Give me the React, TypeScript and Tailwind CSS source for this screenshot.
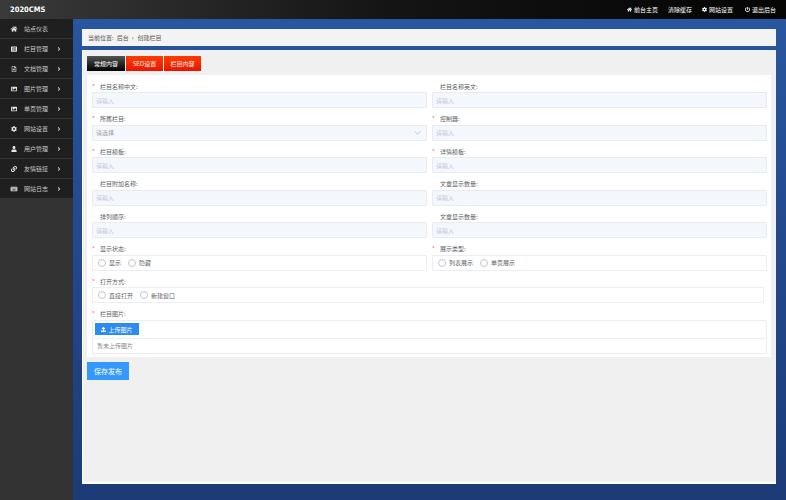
import React from 'react';
import { FaHome, FaListAlt, FaRegFileAlt, FaImage, FaCog, FaUser, FaLink, FaKeyboard, FaAngleRight, FaUpload, FaPowerOff } from 'react-icons/fa';

const font = { fontFamily: '"Noto Sans CJK SC", "Liberation Sans", sans-serif' };

const menu = [
  { label: '站点仪表', icon: FaHome, arrow: false },
  { label: '栏目管理', icon: FaListAlt, arrow: true },
  { label: '文档管理', icon: FaRegFileAlt, arrow: true },
  { label: '图片管理', icon: FaImage, arrow: true },
  { label: '单页管理', icon: FaImage, arrow: true },
  { label: '网站设置', icon: FaCog, arrow: true },
  { label: '用户管理', icon: FaUser, arrow: true },
  { label: '友情链接', icon: FaLink, arrow: true },
  { label: '网站日志', icon: FaKeyboard, arrow: true },
];

const Label = ({ text, required }: { text: string; required?: boolean }) => (
  <div className="flex h-[11px] items-center text-[6px] leading-none text-[#606266]">
    <span className="w-[8px] text-[#f56c6c]">{required ? '*' : ''}</span>
    <span>{text}:</span>
  </div>
);

const Input = ({ label, required, placeholder = '请输入' }: { label: string; required?: boolean; placeholder?: string }) => (
  <div className="h-[32.5px]">
    <Label text={label} required={required} />
    <div className="flex h-[16px] items-center rounded-[1px] border border-[#e8ebf0] bg-[#f4f7fc] px-[3px] text-[6px] text-[#c0c8d4]">
      {placeholder}
    </div>
  </div>
);

const Radio = ({ text }: { text: string }) => (
  <span className="flex items-center text-[6px] text-[#606266]">
    <span className="mr-[3px] h-[8px] w-[8px] rounded-full border border-[#c4c8d0] bg-white" />
    {text}
  </span>
);

const RadioGroup = ({ label, options }: { label: string; options: string[] }) => (
  <div className="h-[32.5px]">
    <Label text={label} required />
    <div className="flex h-[16px] items-center gap-[7px] rounded-[1px] border border-[#eceef2] bg-white px-[5px]">
      {options.map((o) => (
        <Radio key={o} text={o} />
      ))}
    </div>
  </div>
);

export default function App() {
  return (
    <div className="flex h-[500px] w-[786px] flex-col overflow-hidden" style={font}>
      <header className="flex h-[19px] shrink-0 items-center justify-between bg-gradient-to-r from-[#3a3a3a] via-[#141414] to-[#050505] pl-[10px] pr-[10px] text-white">
        <span className="text-[7.5px] font-bold" style={{ fontFamily: '"DejaVu Sans Condensed", "DejaVu Sans", sans-serif' }}>2020CMS</span>
        <div className="flex items-center text-[6px]">
          <span className="flex items-center gap-[2px]"><FaHome className="text-[5px]" />前台主页</span>
          <span className="ml-[10px]">清除缓存</span>
          <span className="ml-[10px] flex items-center gap-[2px]"><FaCog className="text-[5px]" />网站设置</span>
          <span className="ml-[12px] flex items-center gap-[2px]"><FaPowerOff className="text-[5px]" />退出后台</span>
        </div>
      </header>
      <div className="flex min-h-0 flex-1">
        <aside className="w-[73px] shrink-0 bg-[#333333]">
          <ul className="bg-[#1f1f1f]">
            {menu.map(({ label, icon: Icon, arrow }) => (
              <li key={label} className="flex h-[20px] items-center border-b border-[#333333] pl-[10px] text-[6px] text-[#c8c8c8]">
                <Icon className="w-[8px] text-[6px] text-[#e5e5e5]" />
                <span className="ml-[6px] w-[24px] whitespace-nowrap">{label}</span>
                {arrow && <FaAngleRight className="ml-[8px] text-[6px] text-[#cccccc]" />}
              </li>
            ))}
          </ul>
        </aside>
        <main className="flex flex-1 flex-col bg-gradient-to-b from-[#28569f] to-[#1c3b77] pb-[16px] pl-[9px] pr-[10px] pt-[10px]">
          <div className="flex h-[17px] items-center bg-[#f3f3f3] pl-[6px] text-[6px] text-[#555555]">
            <span>当前位置:</span>
            <span className="ml-[3px]">后台</span>
            <span className="mx-[3px]">›</span>
            <span className="ml-[1px]">创建栏目</span>
          </div>
          <div className="mt-[4px] flex-1 border-b-2 border-l border-white bg-[#f0f0f0] pr-[5px]">
            <div className="flex h-[25px] items-start pl-[4px] pt-[6px]">
              <span className="flex h-[15px] w-[38px] items-center justify-center bg-gradient-to-b from-[#555555] to-[#050505] text-[6px] text-white">常规内容</span>
              <span className="ml-[1px] flex h-[15px] w-[37px] items-center justify-center bg-gradient-to-b from-[#ff3a00] to-[#e81500] text-[6px] text-white">SEO设置</span>
              <span className="ml-[1px] flex h-[15px] w-[37px] items-center justify-center bg-gradient-to-b from-[#ff3a00] to-[#e81500] text-[6px] text-white">栏目内容</span>
            </div>
            <div className="ml-[4px] h-[282px] bg-white pl-[5px] pr-[4px] pt-[6px]">
              <div className="grid grid-cols-[335px_335px] gap-x-[5px]">
                <Input label="栏目名称中文" required />
                <Input label="栏目名称英文" />
                <div className="h-[32.5px]">
                  <Label text="所属栏目" required />
                  <div className="flex h-[16px] items-center justify-between rounded-[1px] border border-[#e8ebf0] bg-[#f4f7fc] px-[3px] text-[6px] text-[#9a9ea6]">
                    请选择
                    <svg width="7" height="4" viewBox="0 0 8 5" fill="none" stroke="#a0a5ae" strokeWidth="0.8" className="mr-[2px]"><path d="M0.5 0.5 L4 4 L7.5 0.5" /></svg>
                  </div>
                </div>
                <Input label="控制器" required />
                <Input label="栏目模板" required />
                <Input label="详情模板" required />
                <Input label="栏目附加名称" />
                <Input label="文章显示数量" />
                <Input label="排列顺序" />
                <Input label="文章显示数量" />
                <RadioGroup label="显示状态" options={['显示', '隐藏']} />
                <RadioGroup label="展示类型" options={['列表展示', '单页展示']} />
              </div>
              <div className="h-[32.5px] w-[672px]">
                <Label text="打开方式" required />
                <div className="flex h-[16px] items-center gap-[7px] rounded-[1px] border border-[#eceef2] bg-white px-[5px]">
                  <Radio text="直接打开" />
                  <Radio text="新建窗口" />
                </div>
              </div>
              <Label text="栏目图片" required />
              <div className="w-[675px] rounded-[1px] border border-[#eceef2]">
                <div className="flex h-[18px] items-center border-b border-[#eceef2] pl-[2px]">
                  <span className="flex h-[12px] w-[44px] items-center justify-center gap-[2px] bg-[#2d8cf0] text-[6px] text-white">
                    <FaUpload className="text-[5px]" />上传图片
                  </span>
                </div>
                <div className="flex h-[14px] items-center pl-[4px] text-[6px] text-[#888888]">暂未上传图片</div>
              </div>
            </div>
            <button className="ml-[4px] mt-[5px] flex h-[18px] w-[42px] items-center justify-center bg-[#3399ff] text-[7px] text-white">保存发布</button>
          </div>
        </main>
      </div>
    </div>
  );
}
